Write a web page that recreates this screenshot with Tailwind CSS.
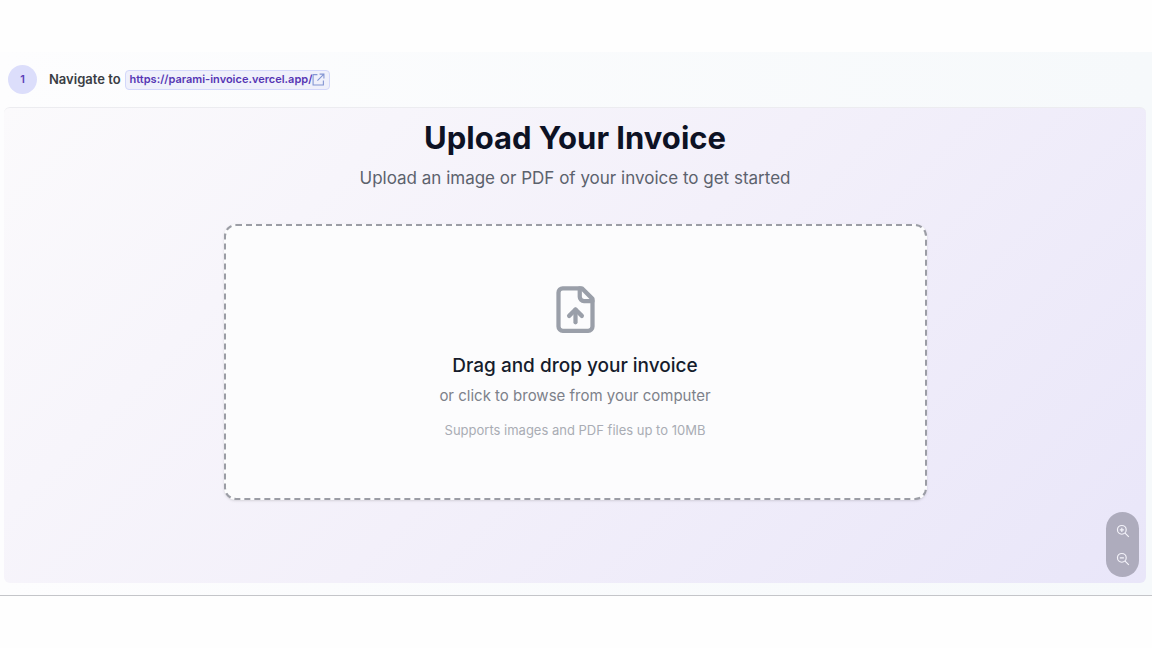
<!DOCTYPE html>
<html lang="en">
<head>
    <meta charset="UTF-8">
    <meta name="viewport" content="width=device-width, initial-scale=1.0">
    <script src="https://cdn.jsdelivr.net/npm/@tailwindcss/browser@4"></script>
    <title>Upload Your Invoice</title>
</head>
<body class="bg-[#fefefe] font-['Inter',sans-serif]">
    <main class="mt-[52px] pb-3 border-b border-[#c4c5c9] bg-linear-to-r from-[#fdfdfe] to-[#f6f9fb]">
        <!-- step header -->
        <header class="flex items-center gap-3 h-[55px] px-2 text-[13px]">
            <span class="flex items-center justify-center size-[29px] rounded-full bg-[#dcdefb] text-[11px] font-semibold text-[#5b3cb8]">1</span>
            <p class="flex items-center gap-1 font-semibold text-[#3a3d44]">
                Navigate to
                <a href="https://parami-invoice.vercel.app/" class="flex items-center h-5 px-1 rounded-sm border border-[#d3d7fa] bg-[#eff0fb] text-[11px] text-[#5636b4]">
                    https://parami-invoice.vercel.app/
                    <svg class="size-[13px] text-[#8294d2]" viewBox="0 0 24 24" fill="none" stroke="currentColor" stroke-width="2">
                        <path d="M10 3H2v19h19v-8M14 2h8v8M22 2 10 14"/>
                    </svg>
                </a>
            </p>
        </header>

        <!-- upload panel -->
        <section class="relative ml-1 mr-[6px] px-4 pt-3 pb-[83px] rounded-md border-t border-[#ececf0] bg-linear-135 from-[#fbfafc] via-[#f3f0fa] to-[#e9e6f9] text-center">
            <h1 class="text-[31px] leading-9 font-bold text-[#0d1224]">Upload Your Invoice</h1>
            <p class="mt-2 text-[17px] leading-7 text-[#5c626d]">Upload an image or PDF of your invoice to get started</p>

            <label for="invoice-file" class="flex flex-col items-center max-w-[703px] mx-auto mt-8 py-[58px] rounded-xl border-2 border-dashed border-[#9b9da5] bg-[#fcfcfd] shadow-sm cursor-pointer">
                <svg class="size-[51px] text-[#9a9fa9]" viewBox="0 0 24 24" fill="none" stroke="currentColor" stroke-width="2" stroke-linecap="round" stroke-linejoin="round">
                    <path d="M15 2H6a2 2 0 0 0-2 2v16a2 2 0 0 0 2 2h12a2 2 0 0 0 2-2V7Z"/>
                    <path d="M14 2v4a2 2 0 0 0 2 2h4"/>
                    <path d="M12 12v6"/>
                    <path d="m15 15-3-3-3 3"/>
                </svg>
                <span class="mt-[17px] text-[19px] leading-7 font-medium text-[#161c2c]">Drag and drop your invoice</span>
                <span class="mt-1 text-[15px] leading-6 text-[#7d818a]">or click to browse from your computer</span>
                <span class="mt-3 text-[13px] leading-5 text-[#a9acb4]">Supports images and PDF files up to 10MB</span>
                <input type="file" id="invoice-file" accept="image/*,.pdf" class="hidden">
            </label>

            <!-- zoom controls -->
            <div class="absolute right-[7px] bottom-[6px] flex flex-col items-center justify-center gap-3 w-[33px] h-[65px] rounded-full bg-[#aeacbd] text-[#f4f3fa]">
                <button type="button" aria-label="Zoom in" class="p-px">
                    <svg class="size-[14px]" viewBox="0 0 24 24" fill="none" stroke="currentColor" stroke-width="2">
                        <circle cx="10" cy="10" r="7.5"/>
                        <path d="m15.5 15.5 6.5 6.5M10 6.5v7M6.5 10h7"/>
                    </svg>
                </button>
                <button type="button" aria-label="Zoom out" class="p-px">
                    <svg class="size-[14px]" viewBox="0 0 24 24" fill="none" stroke="currentColor" stroke-width="2">
                        <circle cx="10" cy="10" r="7.5"/>
                        <path d="m15.5 15.5 6.5 6.5M6.5 10h7"/>
                    </svg>
                </button>
            </div>
        </section>
    </main>
</body>
</html>
